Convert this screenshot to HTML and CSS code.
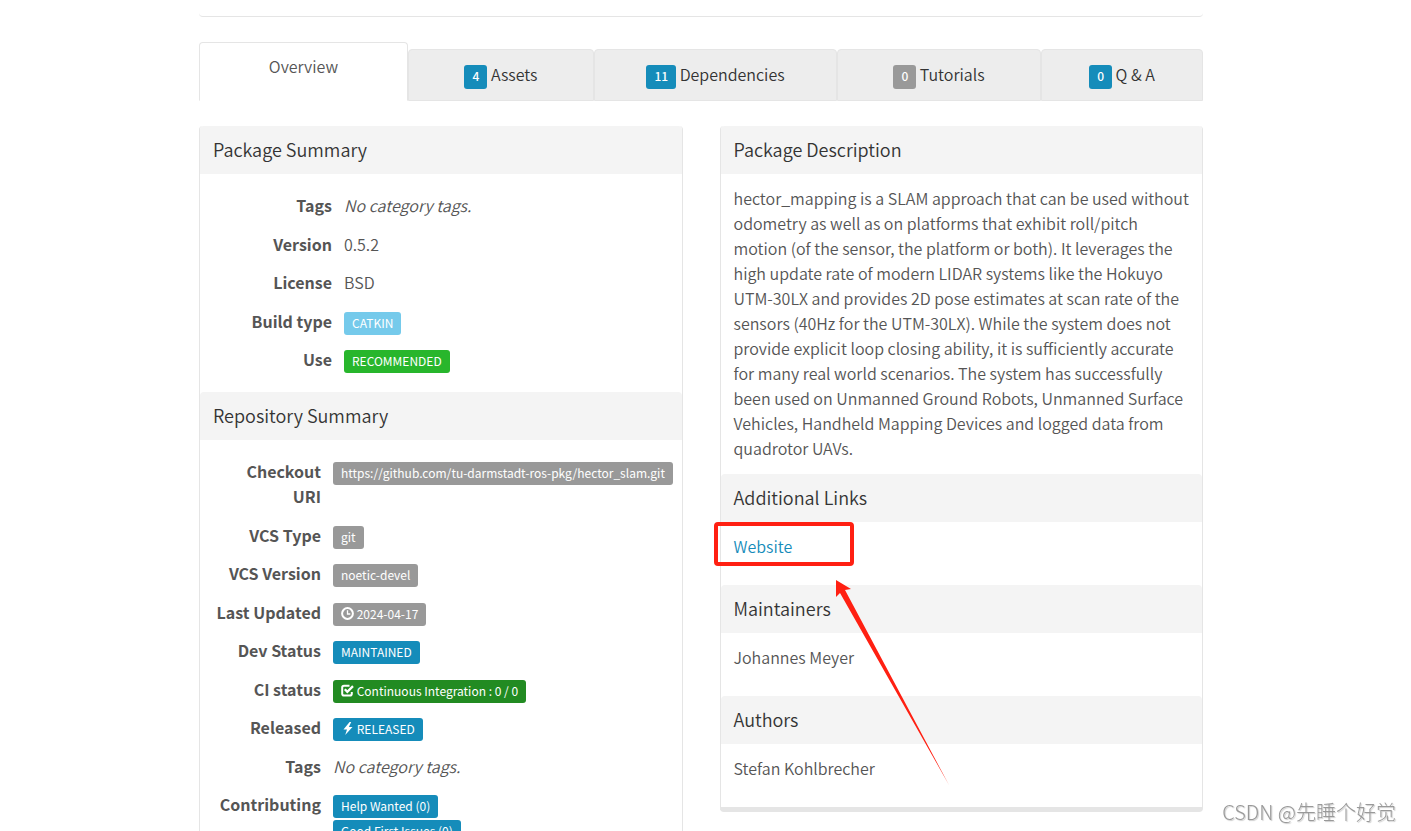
FILE: index.html
```html
<!DOCTYPE html>
<html lang="en">
<head>
<meta charset="utf-8">
<title>hector_mapping</title>
<link rel="stylesheet" href="styles.css">
</head>
<body>
<div class="container">
  <div class="top-panel"></div>
  <nav class="tabs">
    <a class="tab active" href="#overview">Overview</a>
    <a class="tab" href="#assets"><span class="label count primary">4</span> Assets</a>
    <a class="tab" href="#deps"><span class="label count primary">11</span> Dependencies</a>
    <a class="tab" href="#tutorials"><span class="label count default">0</span> Tutorials</a>
    <a class="tab" href="#qa"><span class="label count primary">0</span> Q &amp; A</a>
  </nav>
  <main class="columns">
    <section class="panel">
      <h2 class="heading">Package Summary</h2>
      <div class="body facts-body">
        <table class="facts package">
          <tr><th scope="row">Tags</th><td><em>No category tags.</em></td></tr>
          <tr><th scope="row">Version</th><td>0.5.2</td></tr>
          <tr><th scope="row">License</th><td>BSD</td></tr>
          <tr><th scope="row">Build type</th><td><span class="label info">CATKIN</span></td></tr>
          <tr><th scope="row">Use</th><td><span class="label success">RECOMMENDED</span></td></tr>
        </table>
      </div>
      <h2 class="heading">Repository Summary</h2>
      <div class="body facts-body">
        <table class="facts repository">
          <tr><th scope="row">Checkout URI</th><td><span class="label default">https://github.com/tu-darmstadt-ros-pkg/hector_slam.git</span></td></tr>
          <tr><th scope="row">VCS Type</th><td><span class="label default">git</span></td></tr>
          <tr><th scope="row">VCS Version</th><td><span class="label default">noetic-devel</span></td></tr>
          <tr><th scope="row">Last Updated</th><td><span class="label default"><svg class="icon" viewBox="0 0 13 13" aria-hidden="true"><circle cx="6.500" cy="6.500" r="5.400" fill="none" stroke="currentColor" stroke-width="2"/><path d="M6.500 3.300V7H9.300" fill="none" stroke="currentColor" stroke-width="1.300"/></svg> 2024-04-17</span></td></tr>
          <tr><th scope="row">Dev Status</th><td><span class="label primary">MAINTAINED</span></td></tr>
          <tr><th scope="row">CI status</th><td><span class="label ci"><svg class="icon" viewBox="0 0 13 13" aria-hidden="true"><path d="M8.500 1.800H3Q1.200 1.800 1.200 3.600V9.700Q1.200 11.500 3 11.500H9Q10.800 11.500 10.800 9.700V8" fill="none" stroke="currentColor" stroke-width="2"/><path d="M3.800 5.300L6.300 7.800L12 2.100" fill="none" stroke="currentColor" stroke-width="2.300"/></svg> Continuous Integration : 0 / 0</span></td></tr>
          <tr><th scope="row">Released</th><td><span class="label primary"><svg class="icon" viewBox="0 0 13 13" aria-hidden="true"><path d="M8.600 0L2.500 7.500H6L4.200 13L11.500 5H7.900L10.200 0Z" fill="currentColor"/></svg> RELEASED</span></td></tr>
          <tr><th scope="row">Tags</th><td><em>No category tags.</em></td></tr>
          <tr><th scope="row">Contributing</th><td><span class="label primary">Help Wanted (0)</span><br><span class="label primary">Good First Issues (0)</span></td></tr>
        </table>
      </div>
    </section>
    <section class="panel">
      <h2 class="heading">Package Description</h2>
      <div class="body"><p>hector_mapping is a SLAM approach that can be used without odometry as well as on platforms that exhibit roll/pitch motion (of the sensor, the platform or both). It leverages the high update rate of modern LIDAR systems like the Hokuyo UTM-30LX and provides 2D pose estimates at scan rate of the sensors (40Hz for the UTM-30LX). While the system does not provide explicit loop closing ability, it is sufficiently accurate for many real world scenarios. The system has successfully been used on Unmanned Ground Robots, Unmanned Surface Vehicles, Handheld Mapping Devices and logged data from quadrotor UAVs.</p></div>
      <h2 class="heading">Additional Links</h2>
      <div class="body marked">
        <ul class="list"><li><a class="link" href="#website">Website</a></li></ul>
        <span class="highlight"></span>
        <svg class="arrow" viewBox="0 0 116 206" aria-hidden="true"><path d="M1 0L16 9L10 10L114 205L5 13L1 17Z" fill="#ff2012"/></svg>
      </div>
      <h2 class="heading">Maintainers</h2>
      <div class="body"><ul class="list"><li>Johannes Meyer</li></ul></div>
      <h2 class="heading">Authors</h2>
      <div class="body"><ul class="list"><li>Stefan Kohlbrecher</li></ul></div>
    </section>
  </main>
</div>
<div class="watermark">CSDN @先睡个好觉</div>
</body>
</html>
```
FILE: styles.css
```css
* { box-sizing: border-box; }
body {
  margin: 0;
  padding-right: 9px;
  height: 100vh;
  overflow: hidden;
  background: #fff;
  color: #555;
  font-family: "Noto Sans CJK SC", "Open Sans", sans-serif;
  font-size: 16px;
  font-weight: 350;
  line-height: 25px;
}
.container { max-width: 1004px; margin: 0 auto; }
.top-panel {
  height: 17px;
  border-bottom: 1px solid #e5e5e5;
  border-radius: 0 0 4px 4px;
}
.tabs {
  display: grid;
  grid-template-columns: 209fr 186fr 243fr 204fr 162fr;
  align-items: end;
  margin-top: 25px;
}
.tab {
  height: 52px;
  padding: 12px 0;
  border: 1px solid #e5e5e5;
  border-radius: 4px 4px 0 0;
  background: #ededed;
  color: #333;
  text-align: center;
  text-decoration: none;
}
.tab.active {
  height: 59px;
  padding: 11px 0;
  border-bottom-color: #fff;
  background: #fff;
  color: #555;
}
.columns {
  display: grid;
  grid-template-columns: minmax(0, 1fr) minmax(0, 1fr);
  gap: 37px;
  align-items: start;
  margin-top: 25px;
}
.panel {
  border: solid #e5e5e5;
  border-width: 0 1px 5px;
  border-radius: 4px;
}
.heading {
  margin: 0;
  padding: 11px 13px 12px;
  border-radius: 4px 4px 0 0;
  background: #f4f4f4;
  color: #333;
  font-size: 18px;
  font-weight: 350;
  line-height: 25px;
}
.body { padding: 12px 13px 13px; }
.body p { margin: 0; }
.facts-body { padding: 13px 6px 12px; }
.facts { width: 100%; border-collapse: collapse; table-layout: fixed; }
.facts.package { height: 193px; }
.facts.repository { height: 397px; }
.facts th, .facts td { padding: 6px 0 7px; vertical-align: top; text-align: left; }
.facts th { text-align: right; font-weight: 700; }
.facts td { padding-left: 12px; white-space: nowrap; }
.package th { width: 126px; }
.repository th { width: 115px; padding-left: 10px; }
.label {
  display: inline-block;
  margin: 3px 0 -1px;
  padding: 0 8px 2px;
  border-radius: 3px;
  color: #fff;
  font-size: 12px;
  font-weight: 400;
  line-height: 21px;
  vertical-align: top;
}
.count { font-weight: 500; line-height: 22px; }
.primary { background: #158cba; }
.default { background: #999; }
.info { background: #75caeb; }
.success { background: #28b62c; }
.ci { background: #228b22; }
.icon { width: 13px; height: 13px; vertical-align: -1px; }
.list { margin: 0 0 13px; padding: 0; list-style: none; }
.link { color: #158cba; text-decoration: none; }
.marked { position: relative; }
.highlight {
  position: absolute;
  left: -7px;
  top: 0;
  width: 140px;
  height: 44px;
  border: 4px solid #ff2012;
  border-radius: 4px;
}
.arrow { position: absolute; left: 114px; top: 58px; width: 116px; height: 206px; z-index: 1; }
.watermark {
  position: fixed;
  right: 15px;
  bottom: 7px;
  color: #999;
  font-size: 20px;
  font-weight: 300;
  text-shadow: 1px 1px 1px #ccc;
}
```
